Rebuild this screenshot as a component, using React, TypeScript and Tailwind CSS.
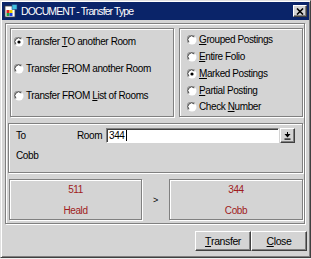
import React from 'react';

const etched = 'border border-[#808080] shadow-[inset_1px_1px_0_#fff,1px_1px_0_#fff]';
const raised =
  'border border-t-white border-l-white border-r-[#404040] border-b-[#404040] shadow-[inset_-1px_-1px_0_#808080]';

function Radio({ checked }: { checked?: boolean }) {
  return (
    <svg width="10" height="10" viewBox="0 0 10 10" className="shrink-0">
      <circle cx="5" cy="5" r="4.5" fill="#fff" />
      <path d="M1.2 7.8 A4.5 4.5 0 0 1 7.8 1.2" stroke="#808080" strokeWidth="1" fill="none" />
      <path d="M2 7.2 A3.5 3.5 0 0 1 7.2 2" stroke="#404040" strokeWidth="1" fill="none" />
      {checked && <circle cx="5" cy="5" r="1.6" fill="#000" />}
    </svg>
  );
}

function Option({ label, checked }: { label: React.ReactNode; checked?: boolean }) {
  return (
    <div className="flex items-center gap-[2px]">
      <Radio checked={checked} />
      <span className="whitespace-nowrap">{label}</span>
    </div>
  );
}

function Btn({ children }: { children: React.ReactNode }) {
  return (
    <button className={`w-[56px] h-[20px] bg-[#d4d4d4] flex items-center justify-center text-[10.5px] ${raised}`}>
      {children}
    </button>
  );
}

export default function App() {
  return (
    <div className="w-[311px] h-[259px] bg-[#f0f0f0]">
      <div className="w-[311px] h-[258px] bg-[#d4d4d4] border border-t-[#e0e0e0] border-l-[#e0e0e0] border-r-[#404040] border-b-[#404040] shadow-[inset_1px_1px_0_#fff,inset_-1px_-1px_0_#808080] p-[1px] flex flex-col font-['Liberation_Sans',Arial,sans-serif] text-[10px] tracking-[-0.4px] text-black leading-none">
        {/* title bar */}
        <div className="h-[18px] bg-[#0a2469] flex items-center pl-[2px] pr-[2px]">
          <svg width="14" height="14" viewBox="0 0 14 14" className="shrink-0">
            <rect x="1" y="2" width="10" height="11" fill="#fff" stroke="#404040" strokeWidth="0.8" />
            <rect x="2.5" y="6" width="3" height="3" fill="#e02020" />
            <rect x="5.5" y="6" width="3" height="3" fill="#f0d000" />
            <rect x="2.5" y="9" width="3" height="3" fill="#20a040" />
            <rect x="5.5" y="9" width="3" height="3" fill="#2040e0" />
            <rect x="8" y="0.5" width="5" height="5" fill="#40c0e0" stroke="#204080" strokeWidth="0.6" />
          </svg>
          <span className="ml-[3px] text-white text-[10.5px] tracking-[-0.9px]">DOCUMENT - Transfer Type</span>
          <div className={`ml-auto w-[14px] h-[12px] bg-[#d4d4d4] flex items-center justify-center ${raised}`}>
            <svg width="8" height="7" viewBox="0 0 8 7">
              <path d="M1 0.5 L7 6.5 M7 0.5 L1 6.5" stroke="#000" strokeWidth="1.6" />
            </svg>
          </div>
        </div>

        {/* main panel */}
        <div className={`mt-[3px] ml-[3px] w-[300px] h-[201px] flex flex-col ${etched}`}>
          <div className="mt-[4px] ml-[4px] flex gap-[5px]">
            <div className={`w-[164px] h-[89px] flex flex-col gap-[17px] pt-[8px] pl-[3px] ${etched}`}>
              <Option checked label={<>Transfer <u>T</u>O another Room</>} />
              <Option label={<>Transfer <u>F</u>ROM another Room</>} />
              <Option label={<>Transfer FROM <u>L</u>ist of Rooms</>} />
            </div>
            <div className={`w-[124px] h-[89px] flex flex-col pt-[3px] pl-[7px] ${etched}`}>
              <div className="h-[16.75px] flex items-center"><Option label={<><u>G</u>rouped Postings</>} /></div>
              <div className="h-[16.75px] flex items-center"><Option label={<><u>E</u>ntire Folio</>} /></div>
              <div className="h-[16.75px] flex items-center"><Option checked label={<><u>M</u>arked Postings</>} /></div>
              <div className="h-[16.75px] flex items-center"><Option label={<><u>P</u>artial Posting</>} /></div>
              <div className="h-[16.75px] flex items-center"><Option label={<>Check <u>N</u>umber</>} /></div>
            </div>
          </div>

          <div className={`mt-[6px] ml-[2px] w-[295px] h-[50px] flex flex-col pt-[4px] pl-[7px] ${etched}`}>
            <div className="h-[15px] flex items-center">
              <span className="w-[61px]">To</span>
              <span className="w-[29px]">Room</span>
              <div className="w-[173px] h-[15px] bg-white border border-t-[#808080] border-l-[#808080] border-r-white border-b-white shadow-[inset_1px_1px_0_#404040] flex items-center pl-[2px]">
                <span>344</span>
                <span className="ml-[1px] w-[1px] h-[11px] bg-black" />
              </div>
              <div className={`ml-[1px] w-[15px] h-[15px] bg-[#d4d4d4] flex items-center justify-center ${raised}`}>
                <svg width="7" height="8" viewBox="0 0 7 8">
                  <path d="M3 0 H4 V2 H6.5 L3.5 5.5 L0.5 2 H3 Z" fill="#000" />
                  <rect x="0.5" y="6.5" width="6" height="1.2" fill="#000" />
                </svg>
              </div>
            </div>
            <div className="mt-[6px] h-[14px] flex items-center">Cobb</div>
          </div>

          <div className="mt-[6px] ml-[3px] flex items-center">
            <div className={`w-[133px] h-[41px] flex flex-col items-center pt-[5px] gap-[11px] text-[#a01c1c] ${etched}`}>
              <span>511</span>
              <span>Heald</span>
            </div>
            <div className="w-[27px] flex justify-center pt-[1px] text-[9px]">&gt;</div>
            <div className={`w-[134px] h-[41px] flex flex-col items-center pt-[5px] gap-[11px] text-[#a01c1c] ${etched}`}>
              <span>344</span>
              <span>Cobb</span>
            </div>
          </div>
        </div>

        <div className="mt-[7px] mr-[2px] flex justify-end">
          <Btn><u>T</u>ransfer</Btn>
          <Btn><u>C</u>lose</Btn>
        </div>
      </div>
    </div>
  );
}
